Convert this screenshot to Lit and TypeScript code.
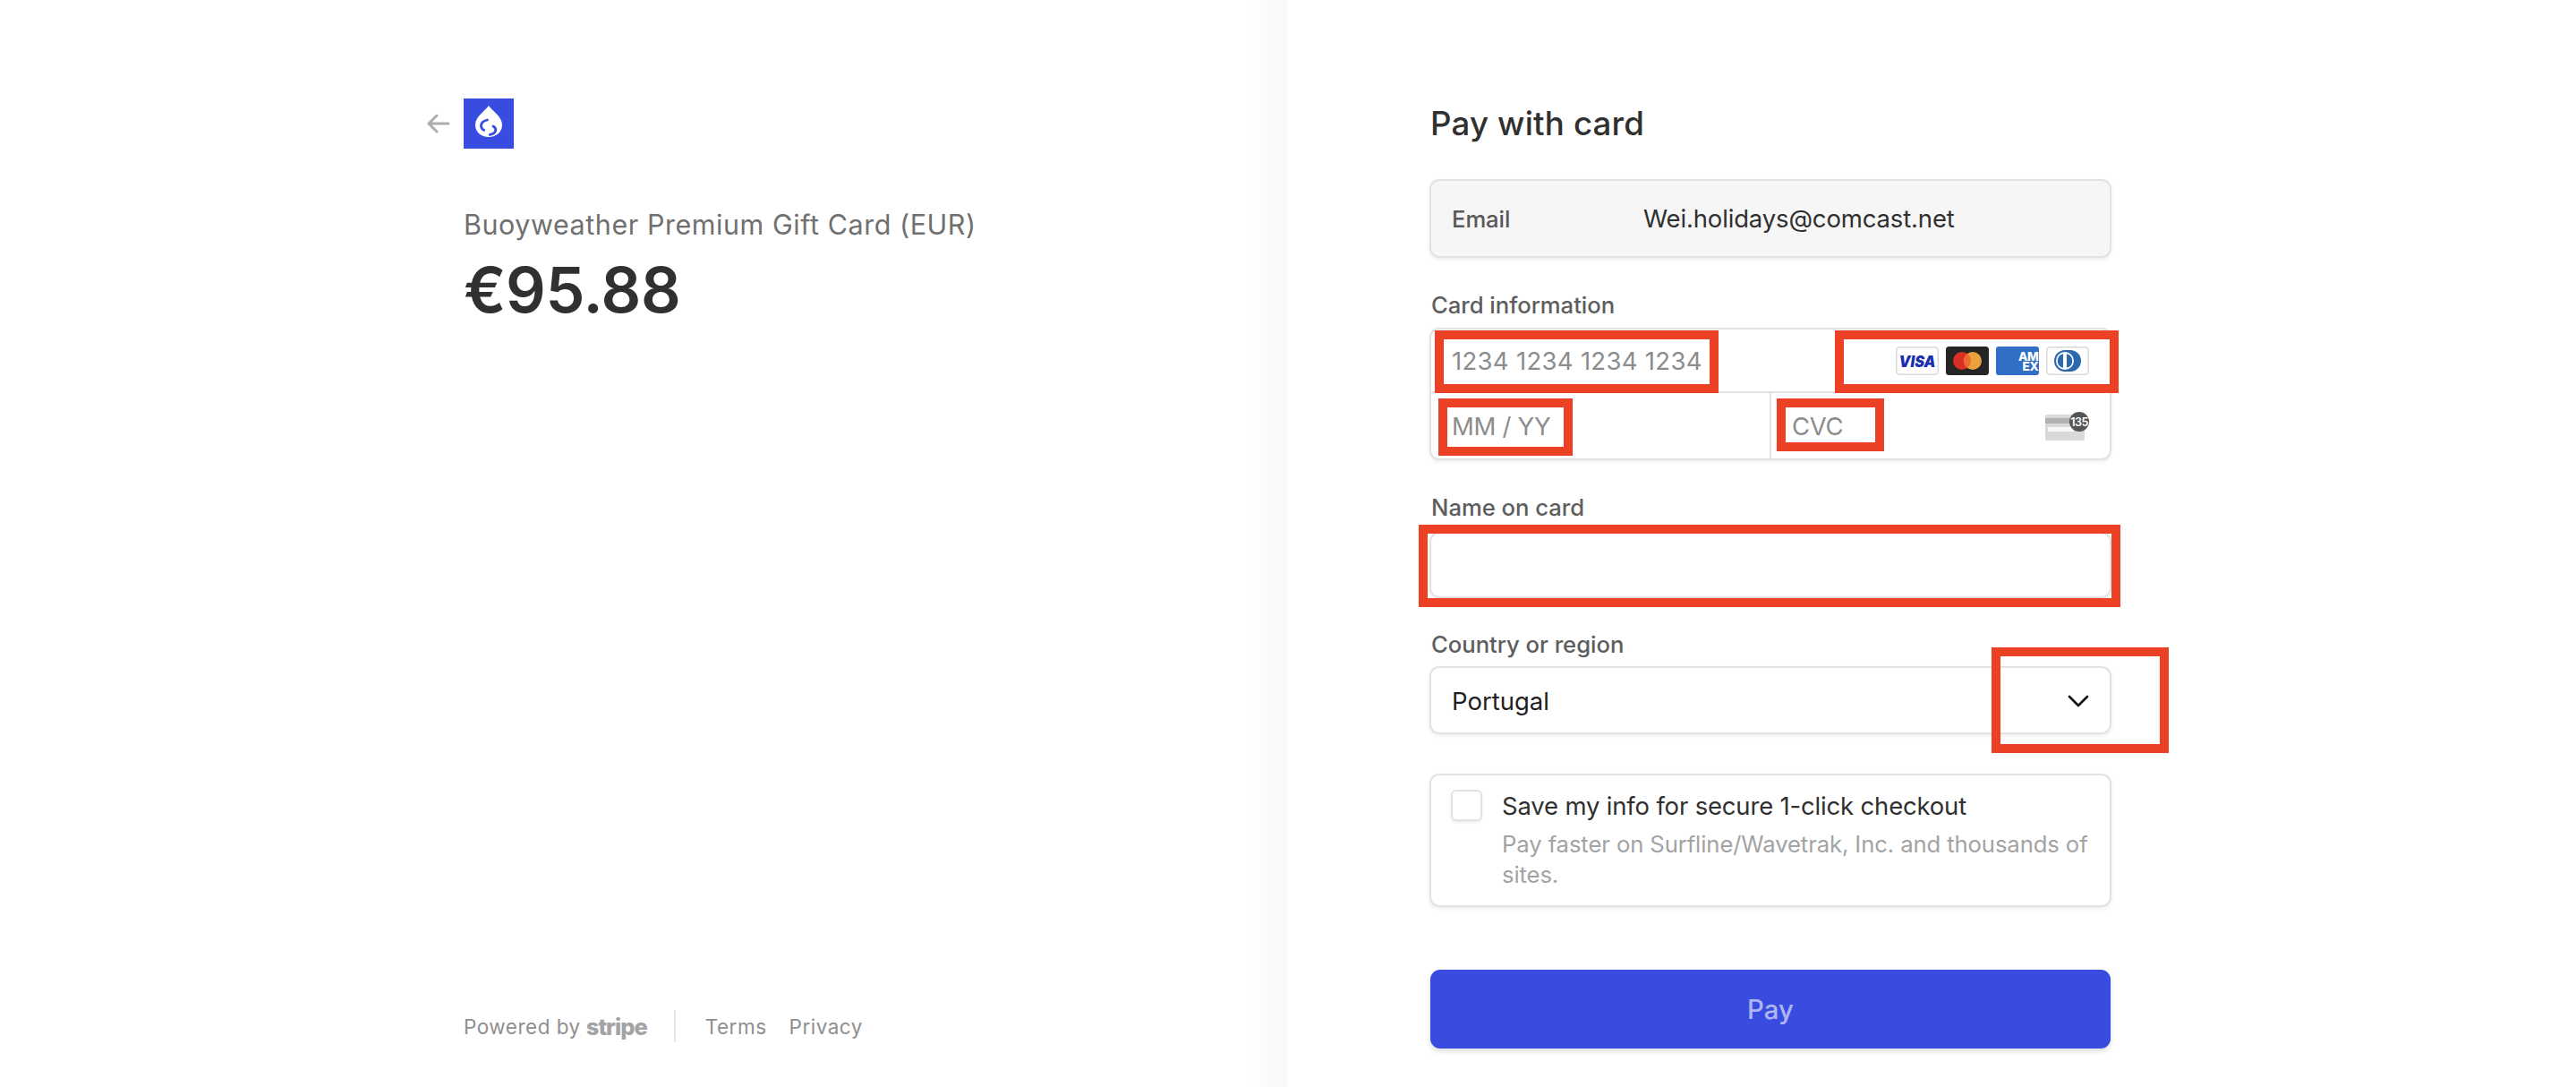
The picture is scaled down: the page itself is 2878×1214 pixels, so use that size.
import { LitElement, html, css, svg } from "lit";
import { customElement } from "lit/decorators.js";

const MARKS: [number, number, number, number][] = [
  [1603, 369, 317, 70],
  [2050, 369, 317, 70],
  [1607, 445, 150, 64],
  [1985, 445, 120, 59],
  [1585, 586, 784, 92],
  [2225, 723, 198, 118],
];

@customElement("app-root")
export class AppRoot extends LitElement {
  static styles = css`
    :host {
      display: block;
      position: relative;
      width: 2878px;
      height: 1214px;
      overflow: hidden;
      background: #fff;
      font-family: Inter, "Liberation Sans", sans-serif;
      color: #303030;
    }
    .page { display: flex; height: 1214px; }
    .left {
      width: 1438px;
      flex: none;
      box-sizing: border-box;
      padding: 110px 0 0 518px;
      display: flex;
      flex-direction: column;
      background: linear-gradient(to right, #fff 0, #fff 1395px, #f8f8f8 1438px);
    }
    .brand { display: flex; align-items: center; gap: 16px; margin-left: -41px; height: 56px; }
    .arrow { width: 25px; height: 22px; display: block; }
    .logo { width: 56px; height: 56px; display: block; }
    .product {
      margin-top: 67px;
      font-size: 30.5px;
      line-height: 36px;
      font-weight: 400;
      color: #707070;
      letter-spacing: 0.55px;
      white-space: nowrap;
    }
    .amount {
      margin-top: 13px;
      font-size: 70px;
      line-height: 84px;
      font-weight: 600;
      color: #303030;
      letter-spacing: -0.4px;
    }
    .foot {
      margin-top: auto;
      margin-bottom: 50px;
      display: flex;
      align-items: center;
      height: 36px;
      font-size: 22.5px;
      color: #8f8f8f;
      letter-spacing: 0.5px;
      white-space: nowrap;
    }
    .stripe { font-weight: 800; font-size: 25.5px; color: #a3a3a3; margin-left: 6px; letter-spacing: -1px; }
    .sep { width: 2px; height: 36px; background: #e6e6e6; margin: 0 33px 0 30px; }
    .terms { margin-right: 25px; }
    .right {
      flex: 1;
      box-sizing: border-box;
      padding: 0 0 0 159px;
      background: #fff;
    }
    .form { width: 762px; }
    h1 {
      margin: 0;
      padding: 116px 0 0 1px;
      font-size: 36.7px;
      line-height: 44px;
      font-weight: 500;
      color: #303030;
      letter-spacing: 0.15px;
    }
    .box {
      box-sizing: border-box;
      border: 2px solid #e2e2e2;
      border-radius: 11px;
      box-shadow: 0 2px 4px rgba(0, 0, 0, 0.07);
      background: #fff;
    }
    .email {
      margin-top: 40px;
      height: 88px;
      background: #f6f6f6;
      display: flex;
      align-items: center;
      padding: 0 0 0 23px;
    }
    .email .k { width: 214px; font-size: 25.7px; font-weight: 500; color: #595959; letter-spacing: -0.1px; }
    .email .v { font-size: 27.5px; color: #303030; letter-spacing: -0.15px; }
    .label {
      padding-left: 2px;
      font-size: 25.7px;
      line-height: 32px;
      font-weight: 500;
      color: #5e5e5e;
      letter-spacing: -0.05px;
    }
    .label.card { margin-top: 37px; margin-bottom: 9px; }
    .group { height: 148px; display: flex; flex-direction: column; }
    .row { display: flex; align-items: center; }
    .row.top { height: 71px; flex: none; box-sizing: border-box; border-bottom: 2px solid #e2e2e2; justify-content: space-between; padding: 0 23px 0 23px; }
    .row.bot { flex: 1; align-items: stretch; }
    .ph { font-size: 27.5px; color: #8c8c8c; letter-spacing: -0.3px; }
    .ph.num { letter-spacing: 0.3px; }
    .cell { display: flex; align-items: center; }
    .cell.a { width: 380px; padding-left: 23px; box-sizing: border-box; border-right: 2px solid #e2e2e2; }
    .cell.b { flex: 1; padding: 0 23px 0 23px; justify-content: space-between; }
    .brands { display: flex; gap: 8px; }
    .brands svg { width: 48px; height: 32px; display: block; }
    .cvc { width: 49px; height: 32px; display: block; }
    .label.name { margin-top: 37px; margin-bottom: 11px; }
    .name-input { height: 74px; }
    .label.country { margin-top: 36px; margin-bottom: 8px; }
    .select {
      height: 76px;
      display: flex;
      align-items: center;
      justify-content: space-between;
      padding: 2px 23px 0 23px;
      font-size: 27.5px;
      color: #1f1f1f;
    }
    .chev { width: 24px; height: 14px; display: block; }
    .save {
      margin-top: 44px;
      height: 149px;
      display: flex;
      padding: 16px 0 0 22px;
    }
    .check { width: 35px; height: 35px; box-sizing: border-box; flex: none; border: 2px solid #e2e2e2; border-radius: 6px; box-shadow: 0 2px 3px rgba(0, 0, 0, 0.08); background: #fff; }
    .save-text { margin-left: 22px; }
    .save-main { font-size: 27.5px; line-height: 36px; color: #303030; white-space: nowrap; letter-spacing: -0.18px; }
    .save-sub { margin-top: 8px; font-size: 25.7px; line-height: 34px; color: #a3a3a3; letter-spacing: -0.12px; }
    .pay {
      margin: 70px 1px 0;
      height: 88px;
      background: #384ddf;
      border-radius: 11px;
      box-shadow: 0 3px 6px rgba(0, 0, 0, 0.14);
      color: rgba(255, 255, 255, 0.6);
      font-size: 29.4px;
      font-weight: 500;
      display: flex;
      align-items: center;
      justify-content: center;
    }
    .mark { position: absolute; box-sizing: border-box; border: 10px solid #ec4125; }
  `;

  private visa() {
    return svg`<svg viewBox="0 0 48 32" xmlns="http://www.w3.org/2000/svg">
      <rect x="0.75" y="0.75" width="46.5" height="30.5" rx="3.5" fill="#fff" stroke="#d9d9d9" stroke-width="1.5"/>
      <text x="3.500" y="22.700" textLength="41" lengthAdjust="spacingAndGlyphs" font-family="Inter, 'Liberation Sans', sans-serif" font-size="17.5" font-weight="900" font-style="italic" fill="#1a2fb0">VISA</text>
    </svg>`;
  }
  private master() {
    return svg`<svg viewBox="0 0 48 32" xmlns="http://www.w3.org/2000/svg">
      <rect width="48" height="32" rx="3.5" fill="#252525"/>
      <circle cx="18" cy="16" r="10" fill="#d93025"/>
      <circle cx="30" cy="16" r="10" fill="#eba13c"/>
      <path d="M24 8a10 10 0 0 1 0 16a10 10 0 0 1 0-16z" fill="#ed6b2e"/>
    </svg>`;
  }
  private amex() {
    return svg`<svg viewBox="0 0 48 32" xmlns="http://www.w3.org/2000/svg">
      <rect width="48" height="32" rx="3" fill="#306fc5"/>
      <g font-family="Inter, 'Liberation Sans', sans-serif" font-size="13.500" font-weight="800" fill="#fff" text-anchor="end" letter-spacing="-0.3">
        <text x="47.500" y="16">AM</text>
        <text x="47.500" y="27">EX</text>
      </g>
    </svg>`;
  }
  private diners() {
    return svg`<svg viewBox="0 0 48 32" xmlns="http://www.w3.org/2000/svg">
      <rect x="0.75" y="0.75" width="46.5" height="30.5" rx="3.5" fill="#fff" stroke="#d9d9d9" stroke-width="1.5"/>
      <path d="M21 4h6a12 12 0 0 1 0 24h-6a12 12 0 0 1 0-24z" fill="#2b68ae"/>
      <circle cx="21" cy="16" r="10" fill="#fff"/>
      <path d="M19 8.200a8 8 0 0 0 0 15.600zM23 8.200a8 8 0 0 1 0 15.600z" fill="#2b68ae"/>
    </svg>`;
  }

  render() {
    return html`
      <div class="page">
        <section class="left">
          <div class="brand">
            <svg class="arrow" viewBox="0 0 25 22" xmlns="http://www.w3.org/2000/svg">
              <path d="M24 11H3M11 2l-9 9 9 9" fill="none" stroke="#adadad" stroke-width="3" stroke-linecap="round" stroke-linejoin="round"/>
            </svg>
            <svg class="logo" viewBox="0 0 56 56" xmlns="http://www.w3.org/2000/svg">
              <rect width="56" height="56" fill="#384ddf"/>
              <path d="M28 8c4 6 15 12 15 21.500C43 37.500 36.500 43 28 43s-15-5.500-15-13.500C13 20 24 14 28 8z" fill="#fff"/>
              <path d="M26.500 24c-4.500 1-7 3.500-7 6.500 0 2 1.200 3.800 3.200 4.700" fill="none" stroke="#384ddf" stroke-width="2.800" stroke-linecap="round"/>
              <path d="M33 31c2.200 1.300 3.200 3 2.700 4.800-.6 2.300-3 4-6.400 4.600" fill="none" stroke="#384ddf" stroke-width="2.800" stroke-linecap="round"/>
            </svg>
          </div>
          <div class="product">Buoyweather Premium Gift Card (EUR)</div>
          <div class="amount">€95.88</div>
          <div class="foot">
            <span>Powered by</span><span class="stripe">stripe</span>
            <span class="sep"></span>
            <span class="terms">Terms</span><span>Privacy</span>
          </div>
        </section>
        <section class="right">
          <div class="form">
            <h1>Pay with card</h1>
            <div class="box email"><span class="k">Email</span><span class="v">Wei.holidays@comcast.net</span></div>
            <div class="label card">Card information</div>
            <div class="box group">
              <div class="row top">
                <span class="ph num">1234 1234 1234 1234</span>
                <span class="brands">${this.visa()}${this.master()}${this.amex()}${this.diners()}</span>
              </div>
              <div class="row bot">
                <div class="cell a"><span class="ph">MM / YY</span></div>
                <div class="cell b">
                  <span class="ph">CVC</span>
                  <svg class="cvc" viewBox="0 0 49 32" xmlns="http://www.w3.org/2000/svg">
                    <rect x="0" y="3" width="44" height="29" rx="2" fill="#d9d9d9"/>
                    <rect x="0" y="7" width="44" height="6" fill="#b0b0b0"/>
                    <rect x="3" y="17" width="29" height="5" rx="1" fill="#f8f8f8"/>
                    <circle cx="38" cy="11" r="11" fill="#555"/>
                    <text x="38" y="15.500" text-anchor="middle" font-family="Inter, 'Liberation Sans', sans-serif" font-size="12.500" font-weight="600" fill="#fff" letter-spacing="-0.5">135</text>
                  </svg>
                </div>
              </div>
            </div>
            <div class="label name">Name on card</div>
            <div class="box name-input"></div>
            <div class="label country">Country or region</div>
            <div class="box select">
              <span>Portugal</span>
              <svg class="chev" viewBox="0 0 24 14" xmlns="http://www.w3.org/2000/svg">
                <path d="M2 2l10 10L22 2" fill="none" stroke="#111" stroke-width="2.6" stroke-linecap="round" stroke-linejoin="round"/>
              </svg>
            </div>
            <div class="box save">
              <div class="check"></div>
              <div class="save-text">
                <div class="save-main">Save my info for secure 1-click checkout</div>
                <div class="save-sub">Pay faster on Surfline/Wavetrak, Inc. and thousands of sites.</div>
              </div>
            </div>
            <div class="pay">Pay</div>
          </div>
        </section>
      </div>
      ${MARKS.map(
        ([x, y, w, h]) =>
          html`<div class="mark" style="left:${x}px;top:${y}px;width:${w}px;height:${h}px"></div>`
      )}
    `;
  }
}
